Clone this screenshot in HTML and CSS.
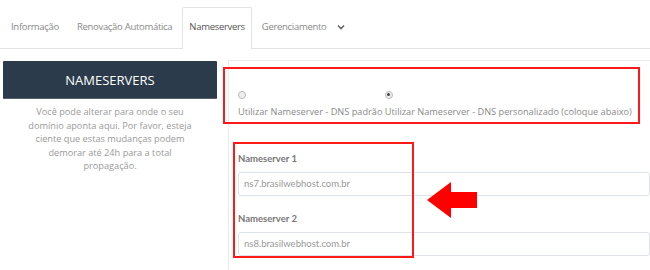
FILE: index.html
```html
<!DOCTYPE html>
<html>
<head>
<meta charset="utf-8">
<link rel="stylesheet" href="styles.css">
</head>
<body>
<nav class="tabs">
  <a class="tab">Informação</a>
  <a class="tab">Renovação Automática</a>
  <a class="tab active">Nameservers</a>
  <a class="tab">Gerenciamento <svg class="chev" width="8" height="6" viewBox="0 0 8 6"><path d="M1 1.5 L4 4.5 L7 1.5" fill="none" stroke="#666" stroke-width="1.6"/></svg></a>
</nav>
<div class="content">
  <aside class="side">
    <div class="side-head">NAMESERVERS</div>
    <p class="side-desc">Você pode alterar para onde o seu domínio aponta aqui. Por favor, esteja ciente que estas mudanças podem demorar até 24h para a total propagação.</p>
  </aside>
  <section class="panel">
    <div class="radios">
      <label class="opt"><span class="radio"></span><br>Utilizar Nameserver - DNS padrão</label>
      <label class="opt"><span class="radio checked"></span><br>Utilizar Nameserver - DNS personalizado (coloque abaixo)</label>
    </div>
    <div class="field">
      <div class="flabel">Nameserver 1</div>
      <div class="input">ns7.brasilwebhost.com.br</div>
    </div>
    <div class="field">
      <div class="flabel">Nameserver 2</div>
      <div class="input">ns8.brasilwebhost.com.br</div>
    </div>
    <div class="mark mark-radios"></div>
    <div class="mark mark-fields"></div>
    <svg class="arrow" width="52" height="38" viewBox="0 0 52 38"><polygon points="0,18 24,0 24,10 50,10 50,26 24,26 24,36" fill="#ff0000"/></svg>
  </section>
</div>
</body>
</html>
```
FILE: styles.css
```css
* { box-sizing: border-box; }
body {
  margin: 0;
  width: 650px;
  height: 270px;
  overflow: hidden;
  background: #fff;
  font-family: "Open Sans", "DejaVu Sans", sans-serif;
}
.tabs {
  display: flex;
  padding: 7px 0 0 2px;
  border-bottom: 1px solid #e3e3e3;
  height: 49px;
}
.tab {
  font-size: 9.5px;
  color: #8a8a8a;
  padding: 12px 8px 0;
  height: 41px;
  border: 1px solid transparent;
  border-bottom: none;
  letter-spacing: -0.3px;
  white-space: nowrap;
}
.tab.active {
  color: #555;
  border-color: #e3e3e3;
  border-radius: 2px 2px 0 0;
  background: #fff;
  height: 42px;
  margin-left: 1px;
  margin-right: 1px;
  padding: 12px 6px 0;
}
.chev { margin-left: 8px; vertical-align: middle; }
.content {
  display: flex;
}
.side {
  width: 214px;
  margin: 12px 0 0 3px;
}
.side-head {
  height: 38px;
  background: #2c3b4b;
  color: #fff;
  font-size: 13px;
  text-align: center;
  line-height: 38px;
  border-radius: 1px;
  border-bottom: 1px solid #55606b;
}
.side-desc {
  margin: 6px 0 0;
  text-align: center;
  color: #9a9a9a;
  font-size: 9.2px;
  line-height: 13.5px;
  padding: 0 20px;
}
.panel {
  position: relative;
  margin: 11px 0 0 11px;
  flex: 1;
  height: 220px;
  border-top: 1px solid #e8ecef;
  border-left: 1px solid #e8ecef;
  padding: 24px 0 0 9px;
}
.radios {
  font-size: 9.2px;
  color: #8a8a8a;
  line-height: 18px;
  height: 60px;
}
.opt { display: inline-block; vertical-align: top; }
.radio {
  display: inline-block;
  width: 8px;
  height: 8px;
  border-radius: 50%;
  border: 1px solid #bbb;
  background: #eee;
  vertical-align: middle;
  position: relative;
}
.radio.checked::after {
  content: "";
  position: absolute;
  left: 1.5px;
  top: 1.5px;
  width: 3px;
  height: 3px;
  border-radius: 50%;
  background: #444;
}
.field { margin-bottom: 0; }
.flabel {
  font-family: "Lato", sans-serif;
  font-weight: bold;
  font-size: 9.5px;
  color: #777;
  height: 16px;
  margin-top: 8px;
}
.input {
  height: 24px;
  border: 1px solid #dde3e8;
  border-radius: 3px;
  margin-top: 3px;
  padding-left: 5px;
  line-height: 22px;
  font-family: "Lato", sans-serif;
  font-size: 9.5px;
  color: #999;
  margin-bottom: 17px;
}
.mark {
  position: absolute;
  border: 2px solid #ff1a1a;
}
.mark-radios { left: -6px; top: 6px; width: 417px; height: 57px; }
.mark-fields { left: 4px; top: 81px; width: 181px; height: 116px; }
.arrow { position: absolute; left: 198px; top: 121px; }
```
